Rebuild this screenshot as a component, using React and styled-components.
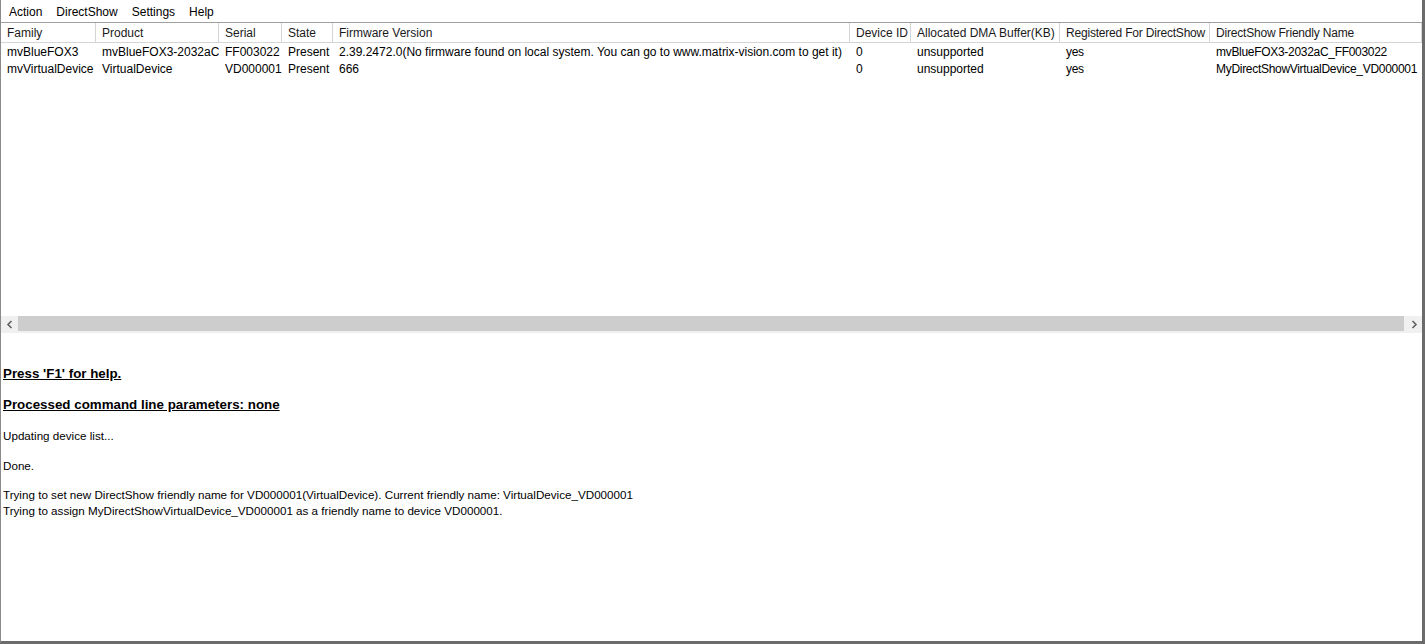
import styled, { createGlobalStyle } from 'styled-components'

const GlobalStyle = createGlobalStyle`
  html, body { margin: 0; padding: 0; background: #fff; }
  body { font-family: "Liberation Sans", Arial, sans-serif; font-size: 12px; color: #000; }
`

const columns = [
  { key: 'family', title: 'Family', width: 95 },
  { key: 'product', title: 'Product', width: 123 },
  { key: 'serial', title: 'Serial', width: 63 },
  { key: 'state', title: 'State', width: 51 },
  { key: 'firmware', title: 'Firmware Version', width: 517 },
  { key: 'deviceId', title: 'Device ID', width: 61 },
  { key: 'dma', title: 'Allocated DMA Buffer(KB)', width: 149 },
  { key: 'registered', title: 'Registered For DirectShow', width: 150, tight: true },
  { key: 'friendly', title: 'DirectShow Friendly Name', width: 212, tight: true },
]

const devices = [
  {
    family: 'mvBlueFOX3',
    product: 'mvBlueFOX3-2032aC',
    serial: 'FF003022',
    state: 'Present',
    firmware: '2.39.2472.0(No firmware found on local system. You can go to www.matrix-vision.com to get it)',
    deviceId: '0',
    dma: 'unsupported',
    registered: 'yes',
    friendly: 'mvBlueFOX3-2032aC_FF003022',
  },
  {
    family: 'mvVirtualDevice',
    product: 'VirtualDevice',
    serial: 'VD000001',
    state: 'Present',
    firmware: '666',
    deviceId: '0',
    dma: 'unsupported',
    registered: 'yes',
    friendly: 'MyDirectShowVirtualDevice_VD000001',
  },
]

const gridTemplate = columns.map(c => `${c.width}px`).join(' ') + ' 1fr'

export default function App() {
  return (
    <>
      <GlobalStyle />
      <Window>
        <MenuBar>
          <MenuItem>Action</MenuItem>
          <MenuItem>DirectShow</MenuItem>
          <MenuItem>Settings</MenuItem>
          <MenuItem>Help</MenuItem>
        </MenuBar>
        <ListView>
          <HeaderRow $template={gridTemplate}>
            {columns.map(c => (
              <HeaderCell key={c.key} $tight={c.tight}>{c.title}</HeaderCell>
            ))}
            <HeaderFiller />
          </HeaderRow>
          <RowList>
            {devices.map(d => (
              <Row key={d.serial} $template={gridTemplate}>
                {columns.map(c => (
                  <Cell key={c.key} $tight={c.tight}>{d[c.key]}</Cell>
                ))}
              </Row>
            ))}
          </RowList>
        </ListView>
        <ScrollBar>
          <Arrow>
            <svg width="8" height="9" viewBox="0 0 8 9">
              <path d="M5.5 1 L2 4.5 L5.5 8" fill="none" stroke="#606060" strokeWidth="1.6" />
            </svg>
          </Arrow>
          <Track>
            <Thumb />
          </Track>
          <Arrow>
            <svg width="8" height="9" viewBox="0 0 8 9">
              <path d="M2.5 1 L6 4.5 L2.5 8" fill="none" stroke="#606060" strokeWidth="1.6" />
            </svg>
          </Arrow>
        </ScrollBar>
        <Log>
          <Heading>Press 'F1' for help.</Heading>
          <Heading>Processed command line parameters: none</Heading>
          <Para>Updating device list...</Para>
          <Para $gap={13}>Done.</Para>
          <Para>
            Trying to set new DirectShow friendly name for VD000001(VirtualDevice). Current friendly name: VirtualDevice_VD000001
            <br />
            Trying to assign MyDirectShowVirtualDevice_VD000001 as a friendly name to device VD000001.
          </Para>
        </Log>
      </Window>
    </>
  )
}

const Window = styled.div`
  width: 1425px;
  height: 644px;
  box-sizing: border-box;
  display: flex;
  flex-direction: column;
  border-left: 1px solid #8a8a8a;
  border-right: 3px solid #6b6b6b;
  border-bottom: 3px solid #6b6b6b;
  overflow: hidden;
`

const MenuBar = styled.div`
  height: 22px;
  display: flex;
  align-items: center;
  padding-left: 1px;
  background: #fff;
`

const MenuItem = styled.span`
  padding: 0 7px;
  line-height: 22px;
  padding-top: 2px;
  font-size: 12px;
`

const ListView = styled.div`
  height: 294px;
  background: #fff;
  overflow: hidden;
`

const HeaderRow = styled.div`
  display: grid;
  grid-template-columns: ${p => p.$template};
  height: 21px;
  box-sizing: border-box;
  border-top: 1px solid #a0a0a0;
  border-bottom: 1px solid #d5d5d5;
  background: #fff;
`

const HeaderCell = styled.div`
  padding-left: 6px;
  padding-top: 1px;
  line-height: 19px;
  border-right: 1px solid #d5d5d5;
  white-space: nowrap;
  overflow: hidden;
  color: #1a1a1a;
  letter-spacing: ${p => (p.$tight ? '-0.2px' : 'normal')};
`

const HeaderFiller = styled.div`
  background: #f0f0f0;
`

const RowList = styled.div`
  padding-top: 1px;
`

const Row = styled.div`
  display: grid;
  grid-template-columns: ${p => p.$template};
  height: 17px;
`

const Cell = styled.div`
  padding-left: 6px;
  white-space: nowrap;
  overflow: hidden;
  line-height: 17px;
  letter-spacing: ${p => (p.$tight ? '-0.3px' : 'normal')};
`

const ScrollBar = styled.div`
  height: 17px;
  display: flex;
  background: #f0f0f0;
`

const Arrow = styled.div`
  width: 17px;
  display: flex;
  align-items: center;
  justify-content: center;
`

const Track = styled.div`
  flex: 1;
  display: flex;
  align-items: flex-start;
`

const Thumb = styled.div`
  flex: 1;
  height: 15px;
  margin-right: 1px;
  background: #cdcdcd;
`

const Log = styled.div`
  flex: 1;
  background: #fff;
  padding: 33px 0 0 2px;
  font-size: 11.65px;
`

const Heading = styled.p`
  margin: 0 0 15px;
  font-size: 13.35px;
  font-weight: bold;
  text-decoration: underline;
  line-height: 16px;
  color: #000;
`

const Para = styled.p`
  margin: 0 0 ${p => p.$gap ?? 14}px;
  line-height: 16px;
  color: #000;
`
